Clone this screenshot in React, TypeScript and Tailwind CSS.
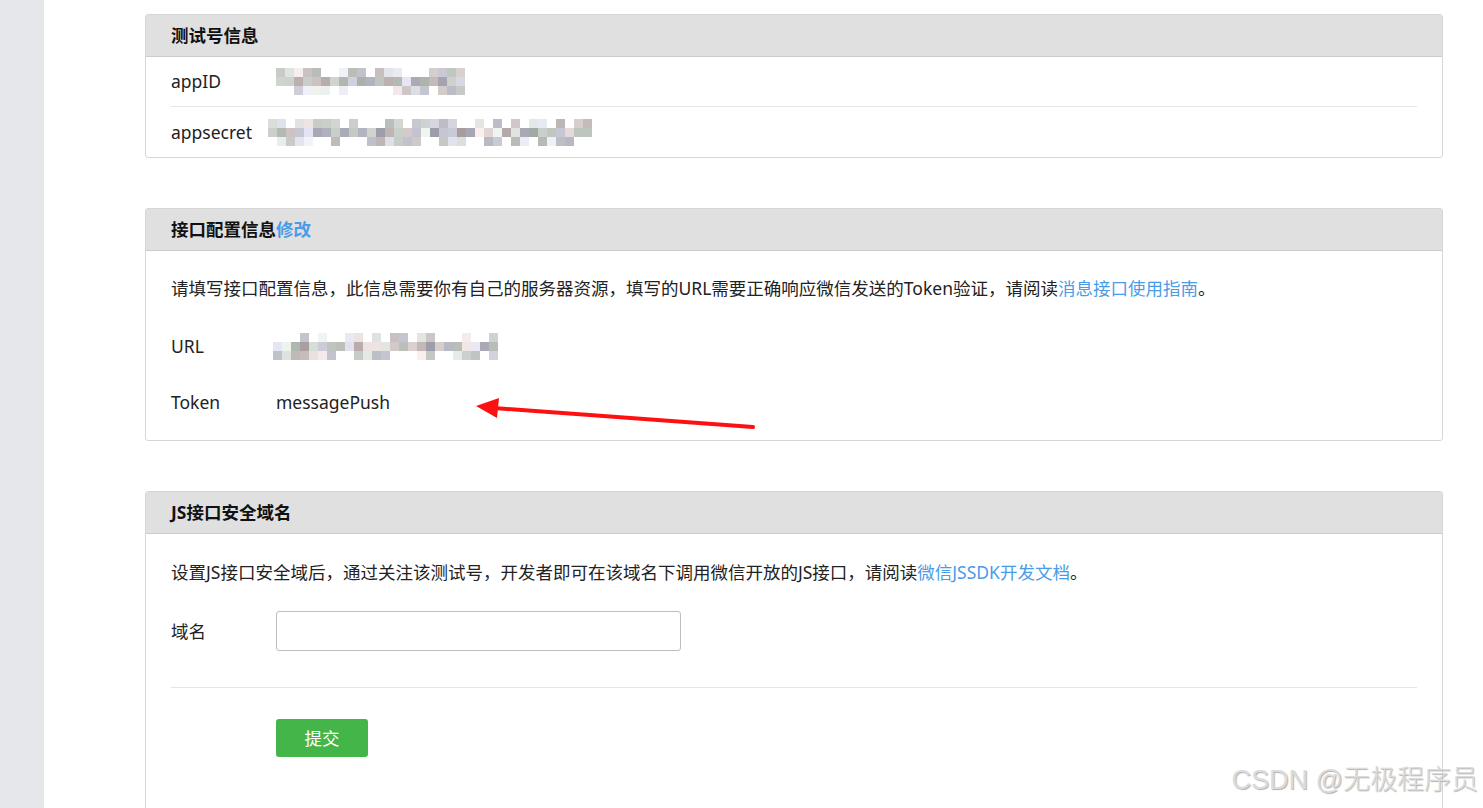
import React from "react";

function rng(seed: number) {
  let s = seed;
  return () => {
    s = (s * 1103515245 + 12345) % 2147483648;
    return s / 2147483648;
  };
}

function Mosaic({ width, height, seed }: { width: number; height: number; seed: number }) {
  const r = rng(seed);
  const cell = 9;
  const cols = Math.floor(width / cell);
  const rows = Math.floor(height / cell);
  const rects: React.ReactNode[] = [];
  for (let y = 0; y < rows; y++) {
    for (let x = 0; x < cols; x++) {
      const v = r();
      if ((y === 0 || y === rows - 1) && v < 0.35) continue;
      const base = 150 + Math.floor(r() * 90);
      const tint = Math.floor(r() * 3);
      const rr = base + (tint === 0 ? 12 : 0);
      const gg = base + (tint === 1 ? 6 : 0);
      const bb = base + (tint === 2 ? 14 : 0);
      rects.push(
        <rect
          key={`${x}-${y}`}
          x={x * cell}
          y={y * cell}
          width={cell}
          height={cell}
          fill={`rgb(${Math.min(rr, 250)},${Math.min(gg, 250)},${Math.min(bb, 250)})`}
          opacity={y === 1 ? 0.95 : 0.7}
        />
      );
    }
  }
  return (
    <svg width={width} height={height} className="block">
      <defs>
        <filter id={`b${seed}`}>
          <feGaussianBlur stdDeviation="0.6" />
        </filter>
      </defs>
      <g filter={`url(#b${seed})`}>{rects}</g>
    </svg>
  );
}

function Panel({ title, children }: { title: React.ReactNode; children: React.ReactNode }) {
  return (
    <section className="border border-[#d6d6d6] rounded-[3px] bg-white">
      <div className="h-[42px] bg-[#e0e0e0] border-b border-[#cccccc] px-[25px] flex items-center font-bold text-[#111111]">
        {title}
      </div>
      {children}
    </section>
  );
}

export default function App() {
  return (
    <div className="relative flex min-h-screen bg-white text-[17.5px] text-[#222222] font-['Noto_Sans','Noto_Sans_CJK_SC',sans-serif] overflow-hidden h-[808px]">
      <div className="w-[44px] shrink-0 bg-[#e6e7ea]" />
      <main className="flex-1 pl-[101px] pr-[40px] pt-[14px] flex flex-col gap-[50px]">
        <Panel title="测试号信息">
          <div className="px-[25px]">
            <div className="h-[50px] flex items-center border-b border-[#e5e5e5]">
              <span className="w-[105px] shrink-0">appID</span>
              <Mosaic width={190} height={27} seed={7} />
            </div>
            <div className="h-[50px] flex items-center">
              <span className="w-[97px] shrink-0">appsecret</span>
              <Mosaic width={328} height={27} seed={21} />
            </div>
          </div>
        </Panel>

        <Panel
          title={
            <span>
              接口配置信息<span className="text-[#4a9be8]">修改</span>
            </span>
          }
        >
          <div className="px-[25px] pt-[22px] pb-[10px]">
            <p className="h-[30px] leading-[30px] whitespace-nowrap">
              请填写接口配置信息，此信息需要你有自己的服务器资源，填写的URL需要正确响应微信发送的Token验证，请阅读
              <span className="text-[#4a9be8]">消息接口使用指南</span>。
            </p>
            <div className="mt-[15px] h-[56px] flex items-center">
              <span className="w-[102px] shrink-0">URL</span>
              <Mosaic width={228} height={27} seed={45} />
            </div>
            <div className="h-[56px] flex items-center">
              <span className="w-[105px] shrink-0">Token</span>
              <span>messagePush</span>
            </div>
          </div>
        </Panel>

        <Panel title="JS接口安全域名">
          <div className="px-[25px] pt-[23px] pb-[60px]">
            <p className="h-[30px] leading-[30px] whitespace-nowrap">
              设置JS接口安全域后，通过关注该测试号，开发者即可在该域名下调用微信开放的JS接口，请阅读
              <span className="text-[#4a9be8]">微信JSSDK开发文档</span>。
            </p>
            <div className="mt-[24px] flex items-center">
              <span className="w-[105px] shrink-0">域名</span>
              <input className="w-[405px] h-[40px] border border-[#bdbdbd] rounded-[3px] px-2 outline-none" />
            </div>
            <div className="mt-[36px] border-t border-[#e5e5e5]" />
            <div className="mt-[31px] pl-[105px]">
              <button className="w-[92px] h-[38px] rounded-[3px] bg-[#44b549] text-white">提交</button>
            </div>
          </div>
        </Panel>
      </main>

      <svg className="absolute left-0 top-0 pointer-events-none" width="1483" height="808">
        <line x1="753" y1="427" x2="494" y2="408" stroke="#ff1010" strokeWidth="4" strokeLinecap="round" />
        <polygon points="476,406 499,398 497,418" fill="#ff1010" />
      </svg>

      <div className="absolute right-[5px] bottom-[8px] text-[27px] text-[#dcdcdc] pointer-events-none [text-shadow:1px_1px_1px_#b0b0b0] font-['Liberation_Sans','Noto_Sans_CJK_SC',sans-serif] font-light">
        CSDN @无极程序员
      </div>
    </div>
  );
}
